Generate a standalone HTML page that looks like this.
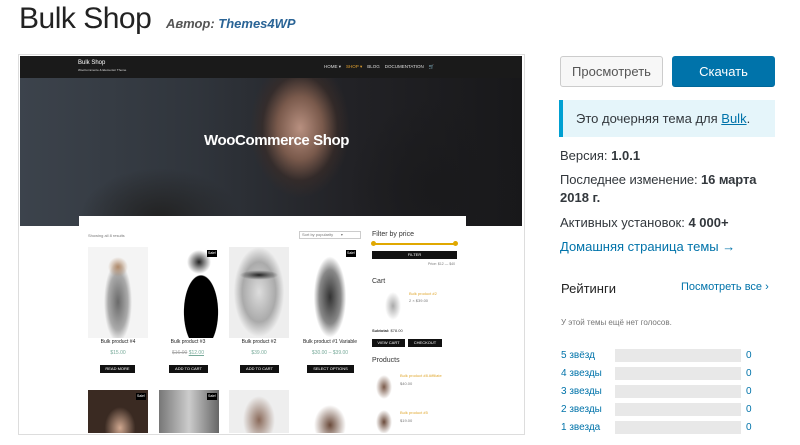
<!DOCTYPE html>
<html><head><meta charset="utf-8"><style>
*{margin:0;padding:0;box-sizing:border-box}
body{width:800px;height:445px;background:#fff;font-family:"Liberation Sans",sans-serif;position:relative;overflow:hidden;color:#32373c}
.a{position:absolute}
.t{white-space:nowrap}
.btn{position:absolute;height:8px;background:#111;color:#fff;font-size:4px;line-height:8px;text-align:center}
.pn{font-size:5px;color:#222;text-align:center;width:70px}
.pp{font-size:5px;color:#7a9;text-align:center;width:70px}
.sale{position:absolute;width:10px;height:7px;background:#000;color:#fff;font-size:3.5px;line-height:7px;text-align:center}
.lbl{position:absolute;left:561px;font-size:10px;color:#0073aa}
.bar{position:absolute;left:615px;width:126px;height:13px;background:#e8e8e8}
.cnt{position:absolute;left:746px;font-size:10px;color:#0073aa}
</style></head><body>
<div class="a t" style="left:19px;top:2px;font-size:30px;font-weight:300;color:#222;letter-spacing:-0.5px">Bulk Shop</div>
<div class="a t" style="left:166px;top:16px;font-size:13px;font-style:italic;font-weight:bold;color:#555">Автор: <span style="color:#2a6496">Themes4WP</span></div>

<div class="a" style="left:18px;top:54px;width:507px;height:381px;border:1px solid #ddd;background:#fff"></div>
<div class="a" style="left:20px;top:56px;width:502px;height:22px;background:#1a1a1a"></div>
<div class="a t" style="left:78px;top:60px;font-size:6px;color:#fff">Bulk Shop</div>
<div class="a t" style="left:78px;top:68px;font-size:3px;color:#ddd">WooCommerce &amp; Elementor Theme</div>
<div class="a t" style="left:324px;top:64px;font-size:4.5px;color:#ddd">HOME ▾ &nbsp;&nbsp; <span style="color:#e0a030">SHOP ▾</span> &nbsp;&nbsp; BLOG &nbsp;&nbsp; DOCUMENTATION &nbsp;&nbsp; 🛒</div>
<div class="a" style="left:20px;top:78px;width:502px;height:148px;background:
radial-gradient(ellipse 50px 70px at 280px 50px,#b89080 0%,#7a5a4c 45%,rgba(60,45,40,0.6) 75%,transparent 100%),
radial-gradient(ellipse 90px 90px at 420px 110px,#1a1a1c,transparent),
radial-gradient(ellipse 80px 50px at 140px 140px,#222,transparent),
linear-gradient(90deg,#3c434c 0%,#30353c 35%,#222226 65%,#18181a 100%)"></div>
<div class="a t" style="left:204px;top:132px;font-size:15px;font-weight:bold;color:#fff;letter-spacing:-0.4px">WooCommerce Shop</div>

<div class="a" style="left:79px;top:216px;width:387px;height:217px;background:#fff"></div>
<div class="a t" style="left:88px;top:233px;font-size:4px;color:#777">Showing all 8 results</div>
<div class="a t" style="left:299px;top:231px;width:62px;height:8px;border:1px solid #ccc;font-size:4px;color:#777;padding-left:2px;line-height:6px">Sort by popularity &nbsp;&nbsp;&nbsp;&nbsp;&nbsp; ▾</div>

<div class="a" style="left:88px;top:247px;width:60px;height:91px;background:radial-gradient(ellipse 10px 10px at 30px 20px,#b08a6a,transparent),radial-gradient(ellipse 14px 40px at 30px 55px,#6a6a6a,#aaa 70%,#f4f4f4 100%)"></div>
<div class="a" style="left:159px;top:247px;width:60px;height:91px;background:radial-gradient(ellipse 12px 12px at 40px 15px,#222,transparent),radial-gradient(ellipse 28px 60px at 42px 65px,#000 60%,#fff 62%)"></div>
<div class="a" style="left:229px;top:247px;width:60px;height:91px;background:radial-gradient(ellipse 24px 6px at 30px 28px,#222,transparent 80%),radial-gradient(ellipse 28px 50px at 30px 45px,#ddd,#aaa 60%,#eee 90%)"></div>
<div class="a" style="left:300px;top:247px;width:60px;height:91px;background:radial-gradient(ellipse 18px 45px at 30px 50px,#333,#888 60%,#fff 90%)"></div>
<div class="sale" style="left:207px;top:250px">Sale!</div><div class="sale" style="left:346px;top:250px">Sale!</div>
<div class="a pn" style="left:83px;top:339px">Bulk product #4</div>
<div class="a pn" style="left:153px;top:339px">Bulk product #3</div>
<div class="a pn" style="left:224px;top:339px">Bulk product #2</div>
<div class="a pn" style="left:295px;top:339px">Bulk product #1 Variable</div>
<div class="a pp" style="left:83px;top:350px">$15.00</div>
<div class="a pp" style="left:153px;top:350px"><s style="color:#aaa">$16.00</s> <u>$12.00</u></div>
<div class="a pp" style="left:224px;top:350px">$39.00</div>
<div class="a pp" style="left:295px;top:350px">$30.00 – $39.00</div>
<div class="btn" style="left:100px;top:365px;width:35px">READ MORE</div>
<div class="btn" style="left:169px;top:365px;width:39px">ADD TO CART</div>
<div class="btn" style="left:240px;top:365px;width:39px">ADD TO CART</div>
<div class="btn" style="left:307px;top:365px;width:47px">SELECT OPTIONS</div>
<div class="a" style="left:88px;top:390px;width:60px;height:43px;background:radial-gradient(ellipse 22px 30px at 32px 38px,#d0a890,#3a2a22 70%)"></div>
<div class="a" style="left:159px;top:390px;width:60px;height:43px;background:linear-gradient(90deg,#777,#ccc,#666)"></div>
<div class="a" style="left:229px;top:390px;width:60px;height:43px;background:radial-gradient(ellipse 20px 30px at 30px 30px,#8a6a5a,#eee 80%)"></div>
<div class="a" style="left:300px;top:390px;width:60px;height:43px;background:radial-gradient(ellipse 20px 25px at 30px 35px,#6a4a3a,#fff 80%)"></div>
<div class="sale" style="left:136px;top:393px">Sale!</div><div class="sale" style="left:207px;top:393px">Sale!</div>

<div class="a t" style="left:372px;top:231px;font-size:7px;color:#333">Filter by price</div>
<div class="a" style="left:373px;top:243px;width:83px;height:2px;background:#e0a800"></div>
<div class="a" style="left:371px;top:241px;width:5px;height:5px;border-radius:50%;background:#e0a800"></div>
<div class="a" style="left:453px;top:241px;width:5px;height:5px;border-radius:50%;background:#e0a800"></div>
<div class="btn" style="left:372px;top:251px;width:85px">FILTER</div>
<div class="a t" style="left:428px;top:262px;font-size:3.5px;color:#777">Price: $12 — $40</div>
<div class="a t" style="left:372px;top:278px;font-size:7px;color:#333">Cart</div>
<div class="a" style="left:382px;top:289px;width:22px;height:34px;background:radial-gradient(ellipse 8px 14px at 11px 17px,#aaa,#fff)"></div>
<div class="a t" style="left:409px;top:291px;font-size:4px;color:#e0a830">Bulk product #2</div>
<div class="a t" style="left:409px;top:298px;font-size:4px;color:#777">2 × $39.00</div>
<div class="a t" style="left:372px;top:328px;font-size:4px;color:#333"><b>Subtotal:</b> $78.00</div>
<div class="btn" style="left:372px;top:339px;width:33px">VIEW CART</div>
<div class="btn" style="left:408px;top:339px;width:34px">CHECKOUT</div>
<div class="a t" style="left:372px;top:357px;font-size:7px;color:#333">Products</div>
<div class="a" style="left:372px;top:371px;width:24px;height:33px;background:radial-gradient(ellipse 8px 12px at 12px 16px,#7a5a4a,#fff)"></div>
<div class="a t" style="left:400px;top:373px;font-size:4px;color:#e0a830">Bulk product #8 Affiliate</div>
<div class="a t" style="left:400px;top:381px;font-size:4px;color:#777">$40.00</div>
<div class="a" style="left:372px;top:408px;width:24px;height:25px;background:radial-gradient(ellipse 8px 12px at 12px 14px,#6a4a3a,#fff)"></div>
<div class="a t" style="left:400px;top:410px;font-size:4px;color:#e0a830">Bulk product #5</div>
<div class="a t" style="left:400px;top:418px;font-size:4px;color:#777">$19.00</div>

<div class="a" style="left:560px;top:56px;width:103px;height:31px;border:1px solid #ccc;background:#f7f7f7;border-radius:3px;font-size:13px;color:#555;text-align:center;line-height:29px">Просмотреть</div>
<div class="a" style="left:672px;top:56px;width:103px;height:31px;background:#0073aa;border-radius:3px;font-size:13px;color:#fff;text-align:center;line-height:31px;border-bottom:1px solid #006799">Скачать</div>
<div class="a" style="left:559px;top:100px;width:216px;height:37px;background:#e5f5fa;border-left:4px solid #00a0d2"></div>
<div class="a t" style="left:576px;top:111px;font-size:13px;color:#32373c">Это дочерняя тема для <span style="color:#0073aa;text-decoration:underline">Bulk</span>.</div>
<div class="a t" style="left:560px;top:148px;font-size:13px">Версия: <b>1.0.1</b></div>
<div class="a t" style="left:560px;top:172px;font-size:13px;letter-spacing:-0.1px">Последнее изменение: <b>16 марта</b></div>
<div class="a t" style="left:560px;top:190px;font-size:13px"><b>2018 г.</b></div>
<div class="a t" style="left:560px;top:215px;font-size:13px">Активных установок: <b>4 000+</b></div>
<div class="a t" style="left:560px;top:239px;font-size:13px;color:#0073aa">Домашняя страница темы →</div>
<div class="a t" style="left:561px;top:281px;font-size:13px;color:#222">Рейтинги</div>
<div class="a t" style="left:681px;top:281px;font-size:11px;color:#0073aa">Посмотреть все ›</div>
<div class="a t" style="left:561px;top:318px;font-size:8px;color:#777">У этой темы ещё нет голосов.</div>
<div class="lbl t" style="top:350px">5 звёзд</div><div class="bar" style="top:349px"></div><div class="cnt" style="top:350px">0</div>
<div class="lbl t" style="top:368px">4 звезды</div><div class="bar" style="top:367px"></div><div class="cnt" style="top:368px">0</div>
<div class="lbl t" style="top:386px">3 звезды</div><div class="bar" style="top:385px"></div><div class="cnt" style="top:386px">0</div>
<div class="lbl t" style="top:404px">2 звезды</div><div class="bar" style="top:403px"></div><div class="cnt" style="top:404px">0</div>
<div class="lbl t" style="top:422px">1 звезда</div><div class="bar" style="top:421px"></div><div class="cnt" style="top:422px">0</div>
</body></html>
